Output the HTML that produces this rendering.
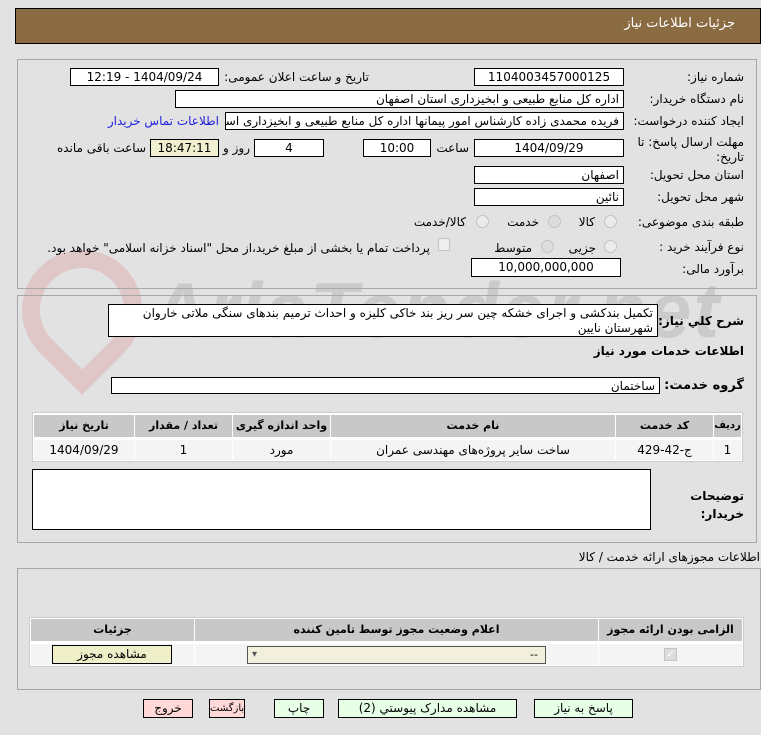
<!DOCTYPE html>
<html><head><meta charset="utf-8"><style>
body{margin:0;width:761px;height:735px;background:#e2e2e2;font-family:"DejaVu Sans","Noto Sans CJK SC",sans-serif;font-size:12px;color:#000;position:relative;overflow:hidden}
div,span{position:absolute;box-sizing:border-box}
.f{background:#fff;border:1px solid #000;direction:rtl;padding:0 4px;line-height:16px;white-space:nowrap;overflow:hidden}
.c{text-align:center}
.l{white-space:nowrap;direction:rtl;text-align:right}
.p{border:1px solid #a8a8a8}
.r{width:13px;height:13px;border-radius:50%;border:1px solid #c4c4c4;background:#ececec}
.th{background:#c8c8c8;font-weight:bold;text-align:center;line-height:22px;font-size:11px}
.td{background:#f4f4f4;text-align:center;line-height:20px}
.b{border:1px solid #000;text-align:center;line-height:17px;background:#e6ffe6;white-space:nowrap;overflow:hidden}
.wm{font-family:"Liberation Sans",sans-serif;font-weight:bold;font-style:italic;color:rgba(160,160,160,0.35);font-size:78px;letter-spacing:2px;white-space:nowrap}
</style></head><body>
<div class="wm" style="left:150px;top:265px">AriaTender.net</div>
<div style="left:22px;top:250px;width:120px;height:120px;border:18px solid rgba(220,150,150,0.35);border-radius:50% 50% 50% 0;transform:rotate(-45deg)"></div>

<div style="left:15px;top:8px;width:746px;height:36px;background:#8b6b42;border:1px solid #000"></div>
<div class="l" style="right:26px;top:16px;color:#fff;font-size:13px">جزئیات اطلاعات نیاز</div>

<div class="p" style="left:17px;top:59px;width:740px;height:230px"></div>
<div class="l" style="right:17px;top:70px">شماره نیاز:</div>
<div class="f c" style="left:474px;top:68px;width:150px;height:18px">1104003457000125</div>
<div class="l" style="right:392px;top:70px">تاریخ و ساعت اعلان عمومی:</div>
<div class="f c" style="left:70px;top:68px;width:149px;height:18px">1404/09/24 - 12:19</div>
<div class="l" style="right:17px;top:92px">نام دستگاه خریدار:</div>
<div class="f" style="left:175px;top:90px;width:449px;height:18px">اداره کل منابع طبیعی و ابخیزداری استان اصفهان</div>
<div class="l" style="right:17px;top:114px">ایجاد کننده درخواست:</div>
<div class="f" style="left:225px;top:112px;width:399px;height:18px">فریده محمدی زاده کارشناس امور پیمانها اداره کل منابع طبیعی و ابخیزداری استان اصفهان</div>
<div class="l" style="right:542px;top:114px;color:#2020e0">اطلاعات تماس خریدار</div>
<div class="l" style="right:17px;top:135px;line-height:15px">مهلت ارسال پاسخ: تا<br>تاریخ:</div>
<div class="f c" style="left:474px;top:139px;width:150px;height:18px">1404/09/29</div>
<div class="l" style="right:292px;top:141px">ساعت</div>
<div class="f c" style="left:363px;top:139px;width:68px;height:18px">10:00</div>
<div class="f c" style="left:254px;top:139px;width:70px;height:18px">4</div>
<div class="l" style="right:511px;top:141px">روز و</div>
<div class="f c" style="left:150px;top:139px;width:69px;height:18px;background:#f0f0d0">18:47:11</div>
<div class="l" style="right:615px;top:141px">ساعت باقی مانده</div>
<div class="l" style="right:17px;top:168px">استان محل تحویل:</div>
<div class="f" style="left:474px;top:166px;width:150px;height:18px">اصفهان</div>
<div class="l" style="right:17px;top:190px">شهر محل تحویل:</div>
<div class="f" style="left:474px;top:188px;width:150px;height:18px">نائین</div>
<div class="l" style="right:17px;top:215px">طبقه بندی موضوعی:</div>
<div class="r" style="left:604px;top:215px"></div><div class="l" style="right:166px;top:215px">کالا</div>
<div class="r" style="left:548px;top:215px;background:#ddd"></div><div class="l" style="right:222px;top:215px">خدمت</div>
<div class="r" style="left:476px;top:215px"></div><div class="l" style="right:295px;top:215px">کالا/خدمت</div>
<div class="l" style="right:17px;top:240px">نوع فرآیند خرید :</div>
<div class="r" style="left:604px;top:240px"></div><div class="l" style="right:165px;top:241px">جزیی</div>
<div class="r" style="left:541px;top:240px;background:#ddd"></div><div class="l" style="right:229px;top:241px">متوسط</div>
<div style="left:438px;top:238px;width:12px;height:13px;border:1px solid #c4c4c4;background:#eee"></div>
<div class="l" style="right:331px;top:241px">پرداخت تمام یا بخشی از مبلغ خرید،از محل "اسناد خزانه اسلامی" خواهد بود.</div>
<div class="l" style="right:17px;top:262px">برآورد مالی:</div>
<div class="f c" style="left:471px;top:258px;width:150px;height:19px">10,000,000,000</div>

<div class="p" style="left:17px;top:295px;width:740px;height:248px"></div>
<div class="l" style="right:17px;top:314px;font-weight:bold;font-size:12px">شرح کلي نياز:</div>
<div class="f" style="left:108px;top:304px;width:550px;height:33px;white-space:normal;line-height:15px;padding-top:1px">تکمیل بندکشی و اجرای خشکه چین سر ریز بند خاکی کلیزه و احداث ترمیم بندهای سنگی ملاتی خاروان شهرستان نایین</div>
<div class="l" style="right:17px;top:344px;font-weight:bold">اطلاعات خدمات مورد نیاز</div>
<div class="l" style="right:17px;top:378px;font-weight:bold;font-size:13px">گروه خدمت:</div>
<div class="f" style="left:111px;top:377px;width:549px;height:17px">ساختمان</div>
<div style="left:32px;top:412px;width:711px;height:50px;background:#fff;border:1px solid #ccc"></div>
<div class="th" style="left:714px;top:415px;width:27px;font-size:10px">ردیف</div>
<div class="th" style="left:616px;top:415px;width:97px">کد خدمت</div>
<div class="th" style="left:331px;top:415px;width:284px">نام خدمت</div>
<div class="th" style="left:233px;top:415px;width:97px">واحد اندازه گیری</div>
<div class="th" style="left:135px;top:415px;width:97px">تعداد / مقدار</div>
<div class="th" style="left:34px;top:415px;width:100px">تاریخ نیاز</div>
<div class="td" style="left:714px;top:440px;width:27px">1</div>
<div class="td" style="left:616px;top:440px;width:97px">ج-42-429</div>
<div class="td" style="left:331px;top:440px;width:284px">ساخت سایر پروژه‌های مهندسی عمران</div>
<div class="td" style="left:233px;top:440px;width:97px">مورد</div>
<div class="td" style="left:135px;top:440px;width:97px">1</div>
<div class="td" style="left:34px;top:440px;width:100px">1404/09/29</div>
<div class="f" style="left:32px;top:469px;width:619px;height:61px"></div>
<div class="l" style="right:17px;top:487px;font-weight:bold;line-height:18px">توضیحات<br>خریدار:</div>

<div class="l" style="right:1px;top:550px">اطلاعات مجوزهای ارائه خدمت / کالا</div>
<div class="p" style="left:17px;top:568px;width:744px;height:122px"></div>
<div style="left:29px;top:617px;width:715px;height:50px;background:#fff;border:1px solid #ccc"></div>
<div class="th" style="left:599px;top:619px;width:143px">الزامی بودن ارائه مجوز</div>
<div class="th" style="left:195px;top:619px;width:403px">اعلام وضعیت مجوز توسط تامین کننده</div>
<div class="th" style="left:31px;top:619px;width:163px">جزئیات</div>
<div class="td" style="left:599px;top:644px;width:143px;height:21px"></div>
<div class="td" style="left:195px;top:644px;width:403px;height:21px"></div>
<div class="td" style="left:31px;top:644px;width:163px;height:21px"></div>
<div style="left:664px;top:648px;width:13px;height:13px;background:#ddd;border:1px solid #c4c4c4;color:#fff;font-size:10px;line-height:11px;text-align:center">✓</div>
<div style="left:247px;top:646px;width:299px;height:18px;background:#f2f0dc;border:1px solid #555"></div>
<div style="left:530px;top:647px;font-size:11px;line-height:15px">--</div>
<div style="left:252px;top:647px;font-size:10px;line-height:15px;color:#555">▾</div>
<div class="b" style="left:52px;top:645px;width:120px;height:19px;background:#eeeec8">مشاهده مجوز</div>

<div class="b" style="left:534px;top:699px;width:99px;height:19px">پاسخ به نیاز</div>
<div class="b" style="left:338px;top:699px;width:179px;height:19px">مشاهده مدارک پیوستي (2)</div>
<div class="b" style="left:274px;top:699px;width:50px;height:19px">چاپ</div>
<div class="b" style="left:209px;top:699px;width:36px;height:19px;background:#ffd8d8;font-size:10px">بازگشت</div>
<div class="b" style="left:143px;top:699px;width:50px;height:19px;background:#ffd8d8">خروج</div>
</body></html>
